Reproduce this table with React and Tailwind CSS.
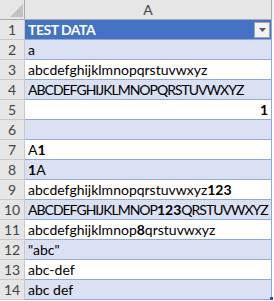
const U = ({ children }) => <span className="tracking-[-1px]">{children}</span>;

const rows = [
  { n: 2, text: <>a</> },
  { n: 3, text: <>abcdefghijklmnopqrstuvwxyz</> },
  { n: 4, text: <U>ABCDEFGHIJKLMNOPQRSTUVWXYZ</U> },
  { n: 5, text: <b>1</b>, right: true },
  { n: 6, text: null },
  { n: 7, text: <>A<b>1</b></> },
  { n: 8, text: <><b>1</b>A</> },
  { n: 9, text: <>abcdefghijklmnopqrstuvwxyz<b>123</b></> },
  { n: 10, text: <><U>ABCDEFGHIJKLMNOP</U><b>123</b><U>QRSTUVWXYZ</U></> },
  { n: 11, text: <>abcdefghijklmnop<b>8</b>qrstuvwxyz</> },
  { n: 12, text: <>"abc"</> },
  { n: 13, text: <>abc-def</> },
  { n: 14, text: <>abc def</> },
];

function RowHead({ n }) {
  return (
    <div className="w-[25px] shrink-0 h-full bg-[#e6e6e6] border-r border-b border-[#c8c8c8] flex items-center justify-center text-[#444] text-[14px]">
      {n}
    </div>
  );
}

export default function App() {
  return (
    <div
      className="w-[274px] h-[301px] bg-white overflow-hidden text-[14px] leading-none text-black"
      style={{ fontFamily: "Lato, 'Liberation Sans', sans-serif" }}
    >
      {/* column header */}
      <div className="flex h-[20px]">
        <div className="relative w-[25px] shrink-0 bg-[#e6e6e6] border-r border-b border-[#ababab]">
          <svg className="absolute right-[1px] bottom-[2px]" width="13" height="13" viewBox="0 0 13 13">
            <polygon points="13,0 13,13 0,13" fill="#c2c2c2" />
          </svg>
        </div>
        <div className="w-[247px] bg-[#e6e6e6] border-r border-b border-[#ababab] flex items-center justify-center text-[#444] text-[14px]">
          A
        </div>
        <div className="flex-1 bg-[#f0f0f0]" />
      </div>

      {/* row 1: table header */}
      <div className="flex h-[20px]">
        <RowHead n={1} />
        <div className="w-[247px] bg-[#4472c4] border-r border-b border-[#8ea9db] flex items-center pl-[3px] pr-[1px] text-white font-bold">
          <span className="flex-1 tracking-[-0.5px]">TEST DATA</span>
          <div className="w-[16px] h-[16px] bg-[#f2f2f2] border border-[#a6a6a6] flex items-center justify-center">
            <svg width="7" height="4" viewBox="0 0 7 4">
              <polygon points="0,0 7,0 3.5,4" fill="#595959" />
            </svg>
          </div>
        </div>
        <div className="flex-1" />
      </div>

      {rows.map((r, i) => (
        <div key={r.n} className="flex h-[20px]">
          <RowHead n={r.n} />
          <div
            className={`relative w-[247px] border-r border-b border-[#8ea9db] flex items-center px-[3px] whitespace-nowrap ${
              i % 2 === 0 ? "bg-[#d9e1f2]" : "bg-white"
            } ${r.right ? "justify-end" : ""}`}
          >
            {r.text}
            {r.n === 14 && (
              <div className="absolute right-[-2px] bottom-[-1px] w-[3px] h-[3px] bg-[#2f55a4]" />
            )}
          </div>
          <div className="flex-1" />
        </div>
      ))}
    </div>
  );
}
